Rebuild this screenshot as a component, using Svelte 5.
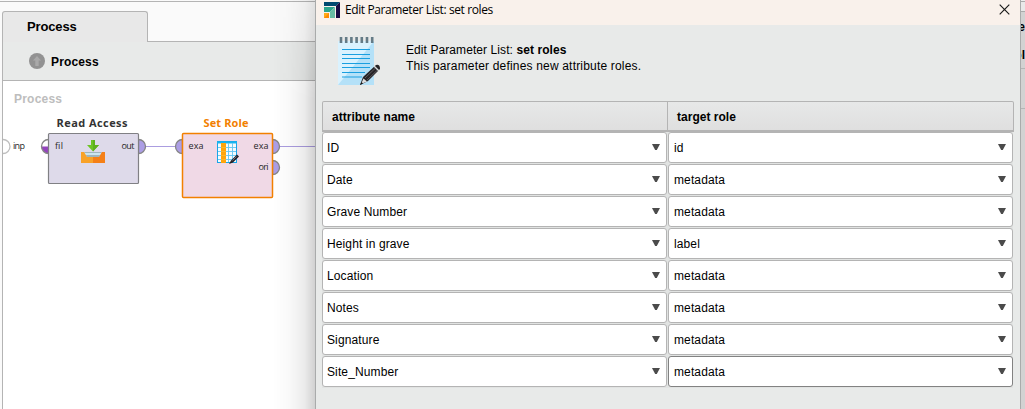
<script>
  const rows = [
    ['ID', 'id'],
    ['Date', 'metadata'],
    ['Grave Number', 'metadata'],
    ['Height in grave', 'label'],
    ['Location', 'metadata'],
    ['Notes', 'metadata'],
    ['Signature', 'metadata'],
    ['Site_Number', 'metadata']
  ];
</script>

<main class="app">
  <section class="workspace">
    <div class="tabs">
      <div class="tab"><span>Process</span></div>
    </div>
    <div class="crumbs">
      <svg width="16" height="16" viewBox="0 0 16 16">
        <circle cx="8" cy="8" r="8" fill="#929292" />
        <path d="M8 3L12 7.5H9.7V13H6.3V7.5H4Z" fill="#a9a9a9" />
      </svg>
      <span>Process</span>
    </div>
    <svg class="canvas" width="312" height="328" viewBox="3 81 312 328">
      <text x="14" y="103" class="b" fill="#bdbdbd" font-size="12" textLength="48">Process</text>
      <path d="M3 139.500A7 7 0 0 1 3 153.500" fill="#fff" stroke="#bdbdbd" stroke-width="1.3" />
      <text x="13" y="149" class="port" textLength="12">inp</text>
      <path d="M146 146.500H176M279 146.500H315" stroke="#ab9de0" stroke-width="1.2" />

      <text x="56.500" y="127" class="title" fill="#333" textLength="71">Read Access</text>
      <path d="M48.500 139.500A7 7 0 0 0 48.500 153.500Z" fill="#fff" />
      <path d="M41.500 146.500A7 7 0 0 0 48.500 153.500V146.500Z" fill="#9444bd" />
      <path d="M48.500 139.500A7 7 0 0 0 48.500 153.500" fill="none" stroke="#858585" stroke-width="1.3" />
      <path d="M138.500 139.500A7 7 0 0 1 138.500 153.500Z" fill="#ac9ee5" stroke="#858585" stroke-width="1.3" />
      <rect x="48.500" y="133.500" width="90" height="50" rx="1" fill="#dedaea" stroke="#808084" stroke-width="1.2" />
      <text x="55" y="149" class="port" textLength="8">fil</text>
      <text x="121.500" y="149" class="port" textLength="13">out</text>
      <path d="M84 152H102L99 157H87Z" fill="#9fb5bd" />
      <path d="M85 153H101V155H85Z" fill="#cce5ef" />
      <path d="M81 152H84L87 157H93V163H81Z" fill="#f8a229" />
      <path d="M105 152H102L99 157H93V163H105Z" fill="#f57f17" />
      <path d="M91 140H95V145H99L93 151.500L87 145H91Z" fill="#6cc424" />
      <path d="M93 140H95V145H99L93 151.500Z" fill="#5db01d" />

      <text x="203.500" y="127" class="title" fill="#f28000" textLength="45">Set Role</text>
      <path d="M182.500 139.500A7 7 0 0 0 182.500 153.500Z" fill="#ac9ee5" stroke="#858585" stroke-width="1.3" />
      <path d="M272.500 139.500A7 7 0 0 1 272.500 153.500ZM272.500 160.500A7 7 0 0 1 272.500 174.500Z" fill="#ac9ee5" stroke="#858585" stroke-width="1.3" />
      <rect x="182.500" y="133.500" width="90" height="64" rx="1" fill="#f0d9e6" stroke="#f28000" stroke-width="1.5" />
      <text x="188.500" y="149" class="port" textLength="15">exa</text>
      <text x="253.500" y="149" class="port" textLength="15">exa</text>
      <text x="258.500" y="170" class="port" textLength="10">ori</text>
      <rect x="217.500" y="141.500" width="19" height="21" fill="#f5fbfd" stroke="#18a5e8" />
      <path d="M217 142.500H237" stroke="#18b5f0" stroke-width="2" />
      <path d="M218 147.500H236M218 151.500H236M218 155.500H236M218 159.500H236M228.500 143V162M232.500 143V162" stroke="#62c5f3" stroke-width=".9" />
      <path d="M221 143H226V163H221Z" fill="#ffa50c" />
      <path d="M221 147.500H226M221 151.500H226M221 155.500H226M221 159.500H226" stroke="#ffb52b" />
      <path d="M229 164L231 160.500L237 154.500L239 156.500L233 162.500Z" fill="#262329" />
      <path d="M232.500 160.500L236.500 156.500" stroke="#8b8590" stroke-width=".8" />
    </svg>
    <div class="shade"></div>
  </section>

  <section class="dialog">
    <header class="titlebar">
      <svg width="16" height="16" viewBox="0 0 16 16">
        <path d="M0 0H16L12 4H0Z" fill="#00496f" />
        <path d="M16 0V16H12V4Z" fill="#170b42" />
        <path d="M0 5H11L6 10H0Z" fill="#2ca58c" />
        <path d="M11 5V16H6V10Z" fill="#69bda4" />
        <path d="M0 11H5V16H0Z" fill="#ff8a00" />
        <path d="M0 11H5L0 16Z" fill="#ffaa17" />
      </svg>
      <span class="caption">Edit Parameter List: set roles</span>
      <svg class="close" width="11" height="11" viewBox="0 0 11 11"><path d="M.7.7L10.300 10.300M10.300.7L.7 10.300" stroke="#181818" stroke-width="1.15" /></svg>
    </header>

    <div class="intro">
      <svg width="44" height="50" viewBox="0 0 44 50">
        <path d="M0 5H36V49H0Z" fill="#daf2fe" />
        <path d="M36 5V49H0Z" fill="#b4e1f8" />
        <path d="M4 13.500H32M4 18.500H32M4 22.500H32M4 27.500H32M4 31.500H32M4 36.500H27M4 41H24" stroke="#1a9fe0" stroke-width="1.2" />
        <path d="M3 1V7M8.200 1V7M13.400 1V7M18.600 1V7M23.800 1V7M29 1V7M34.200 1V7" stroke="#647b86" stroke-width="2.600" />
        <path d="M22 49L25 41L38 29Q42 28 42 33L30 45Z" fill="#252326" />
        <path d="M27 42L37 32.500M29 44L39 34.500" stroke="#69676a" stroke-width=".8" />
        <path d="M36 30L41 35" stroke="#d7dbdc" stroke-width="1.4" />
        <path d="M23 48L25.500 42.500L29 45.500Z" fill="#dedede" />
        <path d="M22 49L23.500 46L25 47.500Z" fill="#171717" />
      </svg>
      <div class="copy">
        <div class="l1">Edit Parameter List: <b>set roles</b></div>
        <div class="l2">This parameter defines new attribute roles.</div>
      </div>
    </div>

    <div class="table">
      <div class="head"><div>attribute name</div><div>target role</div></div>
      {#each rows as [name, role], i}
        <div class="row">
          <div class="cell"><span>{name}</span><svg width="8" height="6" viewBox="0 0 8 6"><path d="M0 0H8L4.800 6H3.200Z" fill="#4b4b4b" /></svg></div>
          <div class="cell" class:focus={i === rows.length - 1}><span>{role}</span><svg width="8" height="6" viewBox="0 0 8 6"><path d="M0 0H8L4.800 6H3.200Z" fill="#4b4b4b" /></svg></div>
        </div>
      {/each}
    </div>
  </section>

  <aside class="side">
    <div class="strip"></div>
    <div class="stub first"><span>e</span></div>
    <div class="stub second"><span>ol</span></div>
    <div class="rest"></div>
  </aside>
</main>

<style>
  :global(body) { margin: 0; }
  .app {
    width: 1025px; height: 409px; display: flex; overflow: hidden;
    font: 12px "Liberation Sans", Arial, sans-serif; color: #000;
    background: #fafafa;
  }
  svg { display: block; flex: none; }
  .workspace {
    position: relative; box-sizing: border-box; width: 315px; height: 409px; flex: none;
    padding-left: 2px; display: flex; flex-direction: column; overflow: hidden;
    background: linear-gradient(#fafafa 1px, #b4b4b4 1px 2px, #fafafa 2px);
  }
  .tabs { height: 42px; box-sizing: border-box; padding-top: 11px; display: flex; flex: none; background: linear-gradient(#b4b4b4, #b4b4b4) bottom right / 168px 1px no-repeat; }
  .tab {
    box-sizing: border-box; width: 146px; height: 31px; padding: 8px 0 0 24px;
    border: 1px solid #b4b4b4; border-bottom: 0; border-radius: 3px 3px 0 0;
    background: #e8e8e8; font-size: 13px; line-height: 14px; font-weight: bold;
  }
  .tab span { letter-spacing: -.15px; }
  .crumbs {
    box-sizing: border-box; height: 39px; flex: none; display: flex; align-items: center; gap: 6px;
    padding-left: 26px; border-left: 1px solid #b4b4b4; border-bottom: 1px solid #b4b4b4;
    background: #e8eae9; font-weight: bold; letter-spacing: .15px;
  }
  .crumbs span { padding-top: 2px; }
  .canvas { border-left: 1px solid #b4b4b4; background: #fff; }
  .b { font-weight: bold; }
  .port { font-size: 9px; fill: #262626; font-family: "Open Sans", sans-serif; }
  .title { font: bold 11px "Open Sans", sans-serif; }
  .shade {
    position: absolute; top: 0; right: 0; bottom: 0; width: 42px;
    background: linear-gradient(90deg, transparent, rgba(0,0,0,.025) 40%, rgba(0,0,0,.08) 75%, rgba(0,0,0,.18));
    mask-image: linear-gradient(rgba(0,0,0,.55), #000 100px);
  }
  .dialog {
    box-sizing: border-box; width: 706px; height: 409px; flex: none;
    border: solid #a9abab; border-width: 0 1px; background: #e8eae9;
  }
  .titlebar { box-sizing: border-box; height: 25px; padding: 0 10px 6px 8px; display: flex; align-items: center; background: #f9f1eb; }
  .caption { margin-left: 5px; font: 12px/16px "Open Sans", sans-serif; letter-spacing: -.4px; padding-top: 1px; }
  .close { margin-left: auto; }
  .intro { height: 76px; box-sizing: border-box; padding: 11px 0 0 22px; display: flex; }
  .copy { padding: 6px 0 0 24px; line-height: 16px; }
  .l1 { letter-spacing: .08px; }
  .l2 { letter-spacing: .18px; }
  .table { margin-left: 6px; width: 692px; }
  .head {
    box-sizing: border-box; height: 31px; display: grid; grid-template-columns: 344px 1fr;
    border: 1px solid #b4b4b4; border-bottom-width: 2px; border-radius: 2px 2px 0 0;
    background: linear-gradient(#e7e8e8, #dfdfdf); font-weight: bold; line-height: 30px;
  }
  .head div { padding-left: 9px; letter-spacing: .02px; }
  .head div + div { border-left: 1px solid #b4b4b4; }
  .row { height: 32px; display: flex; gap: 1px; background: #e1e3e2; width: 691px; }
  .cell {
    box-sizing: border-box; height: 31px; width: 345px; flex: none; display: flex; align-items: center;
    padding: 0 6px 0 4px; border: 1px solid #b4b4b4; border-radius: 3px; background: #fff;
  }
  .cell + .cell { padding-left: 5px; }
  .cell span { flex: 1; letter-spacing: .12px; padding-top: 1px; }
  .cell svg { margin-top: -2px; }
  .focus { border-color: #828282; }
  .side { width: 4px; height: 409px; flex: none; overflow: hidden; background: #d2d2d2; }
  .strip { box-sizing: border-box; height: 12px; background: linear-gradient(#eee 1px, #aaa 1px 2px, #e9e9e9 2px 11px, #aaa 11px); }
  .stub { width: 4px; display: flex; justify-content: flex-end; overflow: hidden; font: bold 12px "Liberation Sans", sans-serif; }
  .first { height: 30px; line-height: 31px; }
  .second { height: 26px; line-height: 27px; border-bottom: 1px solid #b5b5b5; }
  .rest { height: 39px; border-bottom: 1px solid #b5b5b5; }
</style>
